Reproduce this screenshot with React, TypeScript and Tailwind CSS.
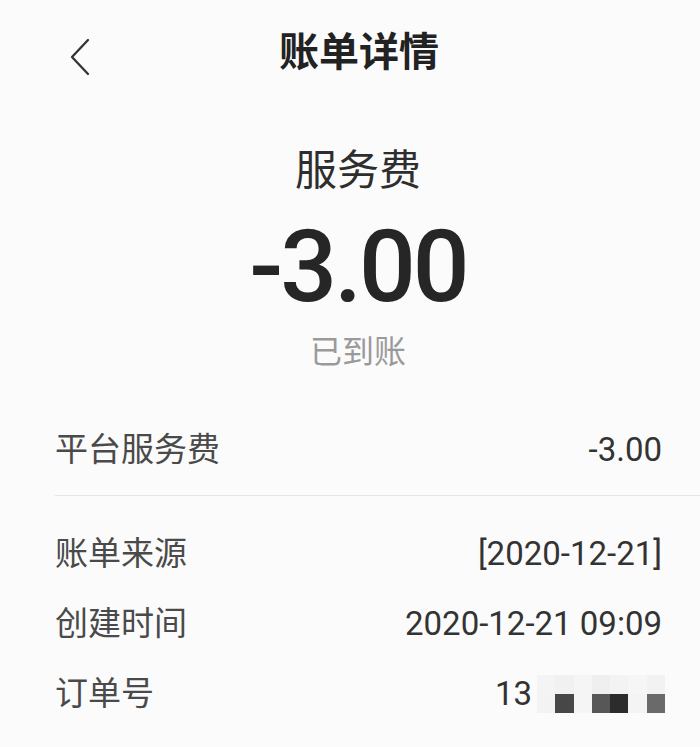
import React from "react";

const cjk = "font-['Roboto','Noto_Sans_CJK_SC',sans-serif]";

const rows = [
  { label: "账单来源", value: "[2020-12-21]" },
  { label: "创建时间", value: "2020-12-21 09:09" },
];

// pixelated block covering the order number
const mosaicTop = ["#f4f4f4", "#f1f1f1", "#f5f5f5", "#efefef", "#f3f3f3", "#f6f6f6", "#f2f2f2"];
const mosaicBottom = ["#f3f3f3", "#474747", "#f5f5f5", "#575757", "#2c2c2c", "#f4f4f4", "#6a6a6a"];

function Mosaic() {
  return (
    <div className="ml-[5px] grid grid-cols-7 w-[128px]">
      {mosaicTop.map((c, i) => (
        <div key={"t" + i} className="h-[19px]" style={{ background: c }} />
      ))}
      {mosaicBottom.map((c, i) => (
        <div key={"b" + i} className="h-[19px]" style={{ background: c }} />
      ))}
    </div>
  );
}

export default function App() {
  return (
    <div className={`w-[700px] h-[747px] bg-[#fbfbfb] overflow-hidden ${cjk}`}>
      {/* Header */}
      <div className="relative h-[106px] flex items-center justify-center">
        <button className="absolute left-[60px] top-[28px] p-2">
          <svg width="28" height="40" viewBox="0 0 28 40" fill="none">
            <polyline
              points="20,4 4,21 20,38"
              stroke="#333"
              strokeWidth="2.3"
              strokeLinecap="round"
              strokeLinejoin="round"
            />
          </svg>
        </button>
        <h1 className="pl-[18px] text-[40px] leading-[48px] font-bold text-[#222]">账单详情</h1>
      </div>

      {/* Summary */}
      <div className="flex flex-col items-center pl-[16px]">
        <div className="mt-[41px] text-[42px] leading-[48px] text-[#2e2e2e]">服务费</div>
        <div className="mt-[22px] text-[100px] leading-[100px] font-medium tracking-[-3px] text-[#262626]">
          -3.00
        </div>
        <div className="mt-[15px] text-[32px] leading-[40px] text-[#9a9a9a]">已到账</div>
      </div>

      {/* Detail rows */}
      <div className="mt-[43px] h-[70px] flex items-center justify-between pl-[55px] pr-[38px]">
        <span className="text-[33px] text-[#4a4a4a]">平台服务费</span>
        <span className="text-[33px] text-[#333]">-3.00</span>
      </div>
      <div className="mt-[10px] ml-[55px] border-t border-[#e6e6e6]" />

      <div className="mt-[23px]">
        {rows.map((r) => (
          <div key={r.label} className="h-[70px] flex items-center justify-between pl-[55px] pr-[38px]">
            <span className="text-[33px] text-[#4a4a4a]">{r.label}</span>
            <span className="text-[33px] text-[#333]">{r.value}</span>
          </div>
        ))}
        <div className="h-[70px] flex items-center justify-between pl-[55px] pr-[35px]">
          <span className="text-[33px] text-[#4a4a4a]">订单号</span>
          <div className="flex items-center">
            <span className="text-[33px] text-[#333]">13</span>
            <Mosaic />
          </div>
        </div>
      </div>
    </div>
  );
}
